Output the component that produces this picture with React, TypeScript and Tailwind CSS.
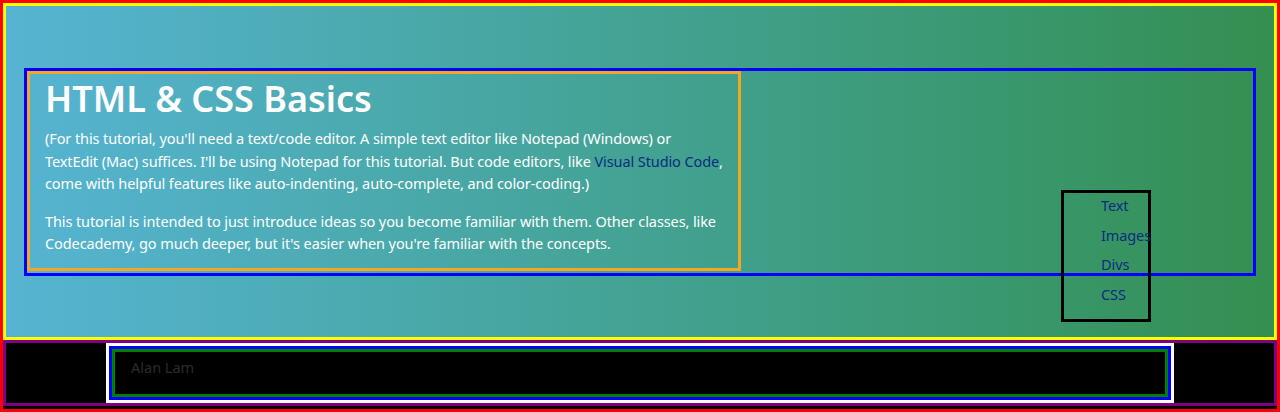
import React from 'react';

const navItems = ['Text', 'Images', 'Divs', 'CSS'];

const font = { fontFamily: '"Noto Sans", "Open Sans", sans-serif' };

export default function App() {
  return (
    <div className="w-[1280px] h-[412px] border-[3px] border-[#ff0000] bg-black overflow-hidden" style={font}>
      <header className="border-[3px] border-[#ffff00] bg-gradient-to-r from-[#56b4d3] to-[#348f50] pt-[62px] pb-[15px] px-[18px] h-[337px]">
        <section className="border-[3px] border-[#0000ff] flex pb-[2px]">
          <div className="w-[714px] h-[200px] border-[3px] border-[#f5a623] pl-[15px] pr-[4px] pt-[3px] text-white">
            <h1 className="text-[36px] font-semibold leading-[44px] mb-[6px]">HTML &amp; CSS Basics</h1>
            <p className="text-[14.5px] leading-[22.5px] tracking-[-0.1px] mb-[15px] whitespace-nowrap">
              (For this tutorial, you'll need a text/code editor. A simple text editor like Notepad (Windows) or
              <br />
              TextEdit (Mac) suffices. I'll be using Notepad for this tutorial. But code editors, like{' '}
              <a className="text-[#0a2d80]">Visual Studio Code</a>,
              <br />
              come with helpful features like auto-indenting, auto-complete, and color-coding.)
            </p>
            <p className="text-[14.5px] leading-[22.5px] tracking-[-0.1px] whitespace-nowrap">
              This tutorial is intended to just introduce ideas so you become familiar with them. Other classes, like
              <br />
              Codecademy, go much deeper, but it's easier when you're familiar with the concepts.
            </p>
          </div>
        </section>
        <div className="flex pl-[1037px] -mt-[86px]">
          <ul className="w-[90px] h-[132px] border-[3px] border-black pl-[37px]">
            {navItems.map((item) => (
              <li key={item} className="text-[14.5px] leading-[24px] mb-[5.5px] tracking-[-0.1px] text-[#0a2d80] whitespace-nowrap">
                <a>{item}</a>
              </li>
            ))}
          </ul>
        </div>
      </header>
      <footer className="border-[3px] border-[#800080] bg-black px-[100px] h-[66px]">
        <div className="border-[3px] border-white">
          <div className="border-[3px] border-[#0000ff]">
            <div className="border-[3px] border-[#008000] h-[48px] px-[16px] pt-[5px] text-[14.5px] leading-[20px]">
              <span className="block text-[#2b2b2b]">Alan Lam</span>
            </div>
          </div>
        </div>
      </footer>
    </div>
  );
}
